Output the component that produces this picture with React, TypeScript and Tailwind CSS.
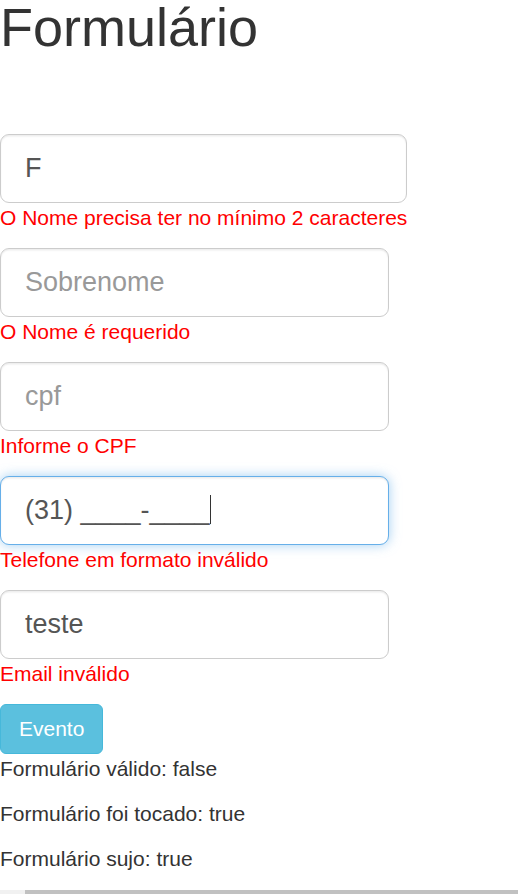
import React from 'react';

const font = { fontFamily: '"Liberation Sans", Arial, sans-serif' };

type FieldProps = {
  value?: string;
  placeholder?: string;
  error: string;
  focused?: boolean;
};

const Field: React.FC<FieldProps> = ({ value, placeholder, error, focused }) => {
  return (
    <div className="w-fit min-w-[389px] mb-[15px]">
      <div className="relative">
        <input
          readOnly
          value={value ?? ''}
          placeholder={placeholder}
          className={
            focused
              ? 'block w-0 min-w-full h-[69px] px-[24px] py-[15px] text-[27px] leading-[1.33] text-[#555] bg-white rounded-[9px] border-[1.5px] border-[#66afe9] outline-none caret-transparent shadow-[inset_0_1.5px_1.5px_rgba(0,0,0,0.075),0_0_12px_rgba(102,175,233,0.6)] placeholder:text-[#999]'
              : 'block w-0 min-w-full h-[69px] px-[24px] py-[15px] text-[27px] leading-[1.33] text-[#555] bg-white rounded-[9px] border-[1.5px] border-[#ccc] outline-none caret-transparent shadow-[inset_0_1.5px_1.5px_rgba(0,0,0,0.075)] placeholder:text-[#999]'
          }
          style={font}
        />
        {focused && (
          <span className="absolute left-[210px] top-[19px] w-px h-[29px] bg-[#333]" />
        )}
      </div>
      <div className="text-[21px] leading-[30px] text-[#ff0000] whitespace-nowrap">{error}</div>
    </div>
  );
};

const App: React.FC = () => {
  return (
    <div className="min-h-[894px] flex flex-col bg-white text-[#333]" style={font}>
      <h1 className="text-[54px] leading-none font-normal m-0">Formulário</h1>

      <form className="mt-[80px]" onSubmit={e => e.preventDefault()}>
        <Field value="F" error="O Nome precisa ter no mínimo 2 caracteres" />
        <Field placeholder="Sobrenome" error="O Nome é requerido" />
        <Field placeholder="cpf" error="Informe o CPF" />
        <Field value="(31) ____-____" error="Telefone em formato inválido" focused />
        <Field value="teste" error="Email inválido" />

        <button
          type="button"
          className="block px-[18px] py-[9px] text-[21px] leading-[30px] text-white bg-[#5bc0de] border-[1.5px] border-[#46b8da] rounded-[6px]"
        >
          Evento
        </button>
      </form>

      <div className="text-[21px] leading-[30px]">
        <p className="mb-[15px]">Formulário válido: false</p>
        <p className="mb-[15px]">Formulário foi tocado: true</p>
        <p className="mb-[15px]">Formulário sujo: true</p>
      </div>

      {/* scrollbar strip at the bottom */}
      <div className="mt-auto h-[4px] bg-[#f1f1f1] flex">
        <div className="ml-[25px] flex-1 bg-[#c1c1c1]" />
      </div>
    </div>
  );
};

export default App;
